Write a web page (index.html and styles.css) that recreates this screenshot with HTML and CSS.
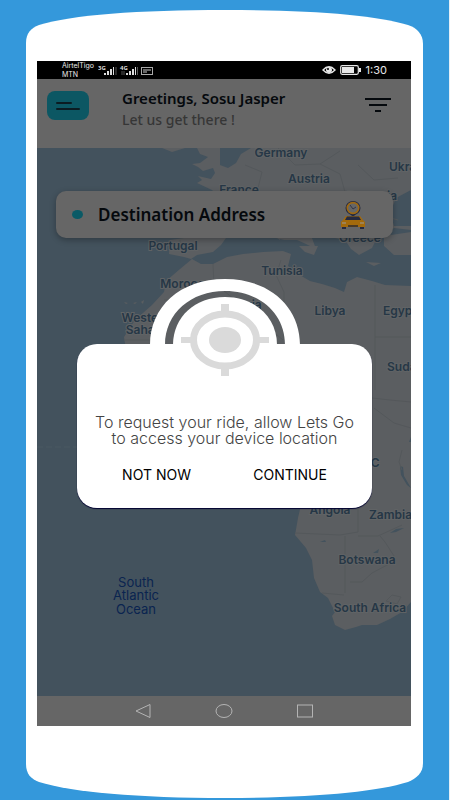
FILE: index.html
```
<!DOCTYPE html>
<html lang="en">
  <head>
    <meta charset="UTF-8" />
    <meta name="viewport" content="width=device-width, initial-scale=1.0" />
    <title>Lets Go</title>
    <link rel="stylesheet" href="styles.css">
  </head>
  <body>
    <div class="phone">
      <svg class="cap" viewBox="0 0 397 51" preserveAspectRatio="none" aria-hidden="true">
        <path d="M0 51V33C0 23 5 18 13 15C45 5 112 0 199 0C286 0 350 5 382 15C391 18 397 24 397 34V51Z" fill="#fff" />
      </svg>

      <div class="screen">
        <div class="status-bar">
          <div class="carrier">AirtelTigo<br>MTN</div>
          <svg class="signals" viewBox="0 0 56 12" aria-hidden="true">
            <g fill="#ddd">
              <text x="0" y="6">3G</text>
              <path d="M6 9h2v2H6zM9 7h2v4H9zM12 5h2v6h-2zM15 3h1v8h-1z" />
              <text x="22" y="6">4G</text>
              <path d="M28 9h2v2h-2zM31 7h2v4h-2zM34 5h2v6h-2zM37 3h1v8h-1z" />
            </g>
            <path d="M18 3v8M39.500 3v8M24 7v4M26 7v4" stroke="#555" fill="none" />
            <rect x="43.500" y="3.500" width="11" height="7" fill="none" stroke="#aaa" />
            <path d="M45 6h8M45 8h4" stroke="#ccc" fill="none" />
          </svg>
          <svg class="eye" viewBox="0 0 14 10" aria-hidden="true">
            <path d="M1 5Q7-1.500 13 5Q7 11.500 1 5Z" fill="none" stroke="#e8e8e8" stroke-width="1.400" />
            <circle cx="7" cy="5" r="3" fill="#e8e8e8" />
            <circle cx="6" cy="4" r="1" fill="#000" />
          </svg>
          <svg class="battery" viewBox="0 0 22 10" aria-hidden="true">
            <rect x="0.700" y="0.700" width="17.600" height="8.600" rx="1.500" fill="none" stroke="#e8e8e8" stroke-width="1.200" />
            <rect x="2" y="2" width="12" height="6" fill="#e8e8e8" />
            <path d="M20 3v4" stroke="#e8e8e8" stroke-width="2" />
          </svg>
          <time>1:30</time>
        </div>

        <header class="top">
          <button class="menu" aria-label="Menu">
            <svg viewBox="0 0 24 10"><path d="M1 2h14M1 8h22" stroke="#0b1c22" stroke-width="2" stroke-linecap="round" /></svg>
          </button>
          <div class="greeting">
            <h1>Greetings, Sosu Jasper</h1>
            <p>Let us get there !</p>
          </div>
          <button class="filter" aria-label="Filter">
            <svg viewBox="0 0 26 16"><path d="M0 2h26M4 8h18M10 14h6" stroke="#05090d" stroke-width="2" /></svg>
          </button>
        </header>

        <main class="map">
          <svg class="world" viewBox="37 148 374 548" preserveAspectRatio="xMinYMin slice">
            <g fill="#5b5e61">
              <!-- Europe -->
              <path d="M162 148L172 152L185 148ZM197 148L200 154L208 157L200 163L192 164L198 167L203 171L213 168L215 173L211 179L198 176L202 180L197 183L212 190L216 194L217 238L184 238L170 240L169 254L184 257L191 259L197 255L213 252L221 245L226 238L246 236L262 233L268 236L284 240L297 240L306 244L316 249L312 238L300 236L320 225L335 238L345 240L351 249L359 255L372 248L376 240L394 228L411 230L411 148Z" />
              <path d="M299 246L318 246L314 255L305 252ZM276 228L283 232L280 240L274 235ZM366 262L381 263L374 266ZM384 236L411 232L411 255L394 255L384 246Z" />
              <!-- Africa -->
              <path d="M192 259L201 264L213 264L227 257L243 254L263 252L283 251L291 254L288 266L298 274L310 281L322 284L335 288L344 292L347 282L357 277L372 281L385 285L411 286L411 602L402 612L390 619L377 625L362 625L356 627L345 630L335 625L332 616L335 612L328 598L320 592L314 578L312 560L306 548L295 535L298 518L303 496L300 478L289 464L285 448L288 432L278 428L264 422L236 426L205 430L180 421L158 402L146 385L123 370L126 350L124 337L135 320L152 305L164 292L166 281L180 269Z" />
              <path d="M124 302l4 1l-2 1zM133 303l4-1l-2 2zM141 302l3-2l-1 4z" />
            </g>
            <g fill="#43525d">
              <path d="M220 148H251L241 154L236 163L228 168L220 165ZM390 213L396 198L411 190V226L394 226ZM390 533l6-4l8-1l-8 4zM373 553l6-4l-1 4zM320 542l5-2l1 2z" />
              <path d="M400 466l3 1l1 9l7 12l-4-3l-6-10zM411 437l-2 5l2 0z" />
            </g>
            <g fill="none" stroke="#54585b">
              <path d="M213 264L214 286L190 300L164 300M281 260L276 275L284 292L284 340L322 360M375 285V390M375 337H411M217 285L283 340M124 340H152M372 398L390 400L411 402M374 408L394 423L411 428M402 450L399 462L402 470M295 533L340 535L358 532L358 508M345 593L345 536M350 582L362 582L372 573L389 564L394 556L385 542L380 536M358 536L378 536L402 525M245 165L262 172L258 188M278 148L295 165L320 164L340 151M320 164L340 174L345 192M358 165L374 180L398 178M398 220L380 215M180 240L181 250M322 593L344 595" />
              <path d="M386 601L392 595L401 597L397 604Z" />
              <path d="M37 447H77" stroke="#4b5963" stroke-dasharray="6 3" />
            </g>
            <g class="countries">
              <text x="281" y="157">Germany</text>
              <text x="309" y="183">Austria</text>
              <text x="239" y="194">France</text>
              <text x="389" y="171" class="from-left">Ukraine</text>
              <text x="347" y="200" class="from-left">Romania</text>
              <text x="173" y="250">Portugal</text>
              <text x="360" y="242">Greece</text>
              <text x="282" y="275">Tunisia</text>
              <text x="186" y="288">Morocco</text>
              <text x="241" y="309">Algeria</text>
              <text x="330" y="315">Libya</text>
              <text x="383" y="315" class="from-left">Egypt</text>
              <text x="146" y="322">Western</text>
              <text x="146" y="334">Sahara</text>
              <text x="387" y="371" class="from-left">Sudan</text>
              <text x="367" y="467">DRC</text>
              <text x="330" y="514">Angola</text>
              <text x="369" y="519" class="from-left">Zambia</text>
              <text x="367" y="564">Botswana</text>
              <text x="370" y="612">South Africa</text>
            </g>
            <g class="ocean">
              <text x="136" y="587">South</text>
              <text x="136" y="600">Atlantic</text>
              <text x="136" y="614">Ocean</text>
            </g>
          </svg>

          <button class="destination">
            <span class="dot"></span>
            <span class="address">Destination Address</span>
            <svg class="taxi" viewBox="0 0 24 28" aria-hidden="true">
              <path d="M12 16L8 12H16Z" fill="#262a40" />
              <ellipse cx="12" cy="7" rx="7.500" ry="7" fill="#262a40" />
              <ellipse cx="12" cy="7" rx="5.700" ry="5.400" fill="#666" stroke="#a06a12" stroke-width="1.600" />
              <path d="M9 4L12 8L15 6" fill="none" stroke="#262a40" stroke-width="0.800" />
              <path d="M1 25H5V28H1ZM19 25H23V28H19Z" fill="#262a40" />
              <path d="M5 15H19L22 19L24 21V26H0V21L2 19Z" fill="#a36a0c" />
              <path d="M6 15.500H18L20 19H4Z" fill="#262a40" />
              <path d="M7 24H17V26H7Z" fill="#4a3a25" />
              <path d="M1 21.500h4v1H1zM19 21.500h4v1h-4z" fill="#999" />
            </svg>
          </button>

          <div class="dialog" role="dialog" aria-labelledby="ask">
            <svg class="locate" viewBox="0 0 150 100" aria-hidden="true">
              <!-- outer ring, the map shows through the gap -->
              <path d="M0 66C0 28 30 0 75 0S150 28 150 66H135C135 34 109 12 75 12S15 34 15 66Z" fill="#fff" />
              <path d="M23 66C23 38 45 18 75 18S127 38 127 66Z" fill="#fff" />
              <ellipse cx="75" cy="61" rx="31.500" ry="26" fill="none" stroke="#dadada" stroke-width="7" />
              <ellipse cx="75" cy="61" rx="16" ry="13" fill="#dadada" />
              <path d="M71 25h8v8h-8zM71 89h8v8h-8zM31 58h10v6H31zM109 58h10v6h-10z" fill="#dadada" />
            </svg>
            <p id="ask">To request your ride, allow Lets Go<br>to access your device location</p>
            <div class="actions">
              <button>NOT NOW</button>
              <button>CONTINUE</button>
            </div>
          </div>
        </main>

        <nav class="nav-bar">
          <button aria-label="Back"><svg viewBox="0 0 18 16"><path d="M2 8L16 1.500V14.500Z" /></svg></button>
          <button aria-label="Home"><svg viewBox="0 0 18 16"><ellipse cx="9" cy="8" rx="8" ry="6.500" /></svg></button>
          <button aria-label="Recent apps"><svg viewBox="0 0 18 16"><rect x="1.500" y="2" width="15" height="12" /></svg></button>
        </nav>
      </div>

      <svg class="chin" viewBox="0 0 397 72" preserveAspectRatio="none" aria-hidden="true">
        <path d="M0 0V38C0 48 5 53 13 56C45 66 112 72 199 72C286 72 350 66 382 56C391 52 397 47 397 37V0Z" fill="#fff" />
      </svg>
    </div>
  </body>
</html>
```

FILE: styles.css
```
* {
  box-sizing: border-box;
}
body {
  margin: 0;
  min-height: 100vh;
  display: flex;
  padding: 10px 26px 2px;
  background: #3498db;
  border-right: 1px solid #e4eff7;
  font-family: "Noto Sans", sans-serif;
}
button {
  padding: 0;
  border: none;
  background: none;
  font-family: inherit;
  color: inherit;
}
svg {
  display: block;
}
.phone {
  flex: 1;
  display: flex;
  flex-direction: column;
}
.cap,
.chin {
  width: 100%;
  height: 51px;
}
.chin {
  height: 72px;
}
.screen {
  flex: 1;
  display: flex;
  flex-direction: column;
  border: solid #fff;
  border-width: 0 12px 0 11px;
  background: #666;
}

/* status bar */
.status-bar {
  display: flex;
  align-items: center;
  height: 18px;
  padding: 0 24px 0 25px;
  background: #000;
  color: #e8e8e8;
}
.carrier {
  width: 36px;
  font-family: Inter, sans-serif;
  font-size: 7px;
  line-height: 9px;
}
.signals {
  width: 56px;
  height: 12px;
  font-size: 6px;
  font-weight: bold;
}
.eye {
  width: 14px;
  height: 10px;
  margin-left: auto;
}
.battery {
  width: 22px;
  height: 10px;
  margin: 0 4px;
}
.status-bar time {
  font-family: Inter, sans-serif;
  font-size: 11px;
}

/* header */
.top {
  display: flex;
  align-items: flex-start;
  height: 69px;
  padding: 8px 20px 0 10px;
}
.menu {
  display: flex;
  align-items: center;
  justify-content: center;
  width: 42px;
  height: 29px;
  margin-top: 4px;
  border-radius: 8px;
  background: #0c5763;
}
.menu svg {
  width: 24px;
  height: 10px;
}
.greeting {
  flex: 1;
  margin-left: 33px;
}
h1 {
  margin: 0;
  font-size: 15px;
  line-height: 22px;
  font-weight: 600;
  color: #05090d;
}
.greeting p {
  margin: 0;
  font-size: 14px;
  line-height: 22px;
  font-weight: 500;
  color: #363636;
}
.filter {
  margin-top: 10px;
}
.filter svg {
  width: 26px;
  height: 16px;
}

/* map */
.map {
  flex: 1;
  position: relative;
  padding: 43px 18px 0 19px;
  background: #43525d;
}
.world {
  position: absolute;
  inset: 0;
  width: 100%;
  height: 100%;
}
.countries {
  font-family: Inter, sans-serif;
  font-size: 12px;
  font-weight: 600;
  text-anchor: middle;
  fill: #263746;
  stroke: #606365;
  stroke-width: 2px;
  paint-order: stroke;
}
.countries .from-left {
  text-anchor: start;
}
.ocean {
  font-family: Inter, sans-serif;
  font-size: 13px;
  text-anchor: middle;
  fill: #0a2450;
}
.destination {
  position: relative;
  display: flex;
  align-items: center;
  width: 100%;
  height: 47px;
  padding: 0 28px 0 16px;
  border-radius: 10px;
  background: #666;
  box-shadow: 0 2px 6px rgba(0, 0, 0, 0.3);
}
.dot {
  width: 11px;
  height: 9px;
  border-radius: 50%;
  background: #0a5a66;
}
.address {
  margin-left: 15px;
  font-size: 17px;
  line-height: 22px;
  font-weight: 600;
  color: #05090d;
}
.taxi {
  width: 24px;
  height: 28px;
  margin-left: auto;
}

/* location dialog */
.dialog {
  position: relative;
  margin: 106px 21px 0;
  padding: 70px 14px 22px;
  border-radius: 20px;
  background: #fff;
  box-shadow: 0 1px 1px #000030;
  font-family: Inter, sans-serif;
  text-align: center;
}
.locate {
  position: absolute;
  top: -65px;
  left: 50%;
  width: 150px;
  height: 100px;
  margin-left: -75px;
}
.dialog p {
  margin: 0;
  font-size: 16px;
  line-height: 16px;
  font-weight: 300;
  color: #444;
}
.actions {
  display: flex;
  justify-content: space-around;
  margin-top: 18px;
}
.actions button {
  font-size: 14px;
  line-height: 22px;
  color: #000;
}

/* android navigation */
.nav-bar {
  display: flex;
  justify-content: center;
  align-items: center;
  gap: 63px;
  height: 30px;
}
.nav-bar svg {
  width: 18px;
  height: 16px;
  fill: none;
  stroke: #b4b4b4;
}
```
